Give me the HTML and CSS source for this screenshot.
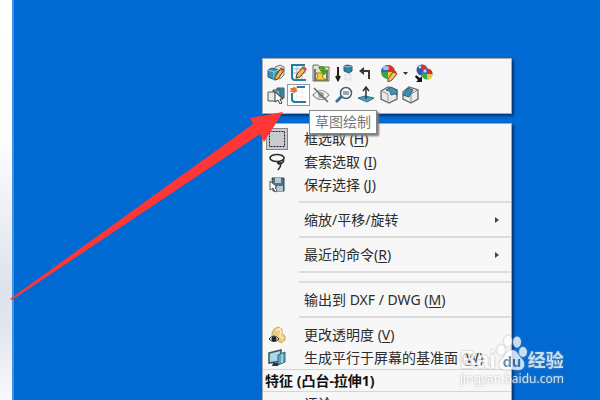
FILE: index.html
```html
<!DOCTYPE html>
<html lang="zh-CN">
<head>
<meta charset="utf-8">
<title>草图绘制</title>
<link rel="stylesheet" href="styles.css">
</head>
<body>
<main class="workspace">
  <aside class="side"></aside>
  <section class="canvas"></section>

  <div class="toolbar" role="toolbar">
    <div class="tools">
      <button class="tool" aria-label="编辑特征"><svg viewBox="0 0 18 18"><path d="M8 3l5-2 4 2v8l-4 4-5-2z" fill="#ddd" stroke="#777"/><path d="M1 6l4-2 6 2v8l-3 2-7-3z" fill="#3d93b5" stroke="#1f5d78"/><path d="M1 6l6 2 4-2M7 8v8" fill="none" stroke="#9bd0e4"/><path d="M8 13l6-9 3 2-6 9-3 1z" fill="#f0b84a" stroke="#5c3a1a"/><path d="M14 4l3 2-1 2-3-2z" fill="#d9534a"/></svg></button>
      <button class="tool" aria-label="编辑草图"><svg viewBox="0 0 18 18"><path d="M3 5h13M3 9h13M7 1v14M12 1v14" stroke="#a9b9c1" fill="none"/><path d="M15 1H2v12q0 3 3 3h11" fill="none" stroke="#237ca6" stroke-width="2"/><path d="M6 14l1-4 6-7 3 3-6 7z" fill="#f1bd4e" stroke="#543b22"/><path d="M12 4l2-2 3 3-2 2z" fill="#ce5148"/></svg></button>
      <button class="tool" aria-label="输入配置"><svg viewBox="0 0 18 18"><path d="M1 1h5l2 2h9v14H1z" fill="#e5e2d6" stroke="#71705f"/><path d="M3 5v11h12V7" fill="none" stroke="#777" stroke-width="2"/><path d="M4 9h8l-2 3 3 4H4l2-4z" fill="#f8d437" stroke="#9c7b20"/><path d="M7 3q6-2 6 3h3l-4 5-4-5h2q0-2-3-1z" fill="#4aa51e" stroke="#397d19" stroke-width=".6"/></svg></button>
      <button class="tool" aria-label="退回"><svg viewBox="0 0 18 18"><path d="M3 3v11M1 12l2 4 2-4" fill="none" stroke="#202020" stroke-width="2"/><path d="M9 2l3-1 5 1v5l-3 2-5-2z" fill="#347fa0" stroke="#205c77"/><path d="M9 2l4 1 4-1" stroke="#9ccce0" fill="none"/><path d="M10 11l6-1v6h-6z" fill="#f1f1f1" stroke="#d5d5d5" stroke-dasharray="2 1"/></svg></button>
      <button class="tool" aria-label="返回"><svg viewBox="0 0 18 18"><path d="M2 7l5-4v3h6v9h-2V8H7v3z" fill="#383838"/></svg></button>
      <button class="tool" aria-label="外观"><svg viewBox="0 0 18 18"><circle cx="8" cy="8" r="7" fill="#35a64a"/><path d="M8 8V1a7 7 0 0 0-7 7z" fill="#3264cf"/><path d="M8 8V1a7 7 0 0 1 7 7z" fill="#df3030"/><path d="M8 8h7a7 7 0 0 1-7 7z" fill="#f2ca31"/><ellipse cx="6" cy="4" rx="3" ry="2" fill="#fff" opacity=".6"/><path d="M8 15l5-7 4 2-5 6-4 2z" fill="#f3c75a" stroke="#6d4b2d"/><path d="M13 8l3-1 1 3z" fill="#c43e37"/></svg></button>
      <button class="caret" aria-label="更多外观"><svg viewBox="0 0 12 18"><path d="M3 8h5l-2.500 3z" fill="#333"/></svg></button>
      <button class="tool" aria-label="复制外观"><svg viewBox="0 0 18 18"><circle cx="7" cy="6" r="5.500" fill="#2c57ad"/><path d="M7 6V.5A5.500 5.500 0 0 1 12.500 6z" fill="#d73232"/><circle cx="12" cy="10" r="5.500" fill="#38a746"/><path d="M12 10V4.500a5.500 5.500 0 0 0-5.500 5.500z" fill="#3973d9"/><path d="M12 10V4.500a5.500 5.500 0 0 1 5.500 5.500z" fill="#de2930"/><path d="M12 10h5.500a5.500 5.500 0 0 1-5.500 5.500z" fill="#e9c934"/><circle cx="5" cy="3" r="1.500" fill="#bdd2f5"/><circle cx="10" cy="7" r="1.500" fill="#c5d8f8"/><path d="M1 11l4 3 2-2v6H1l2-2-3-3z" fill="#161616"/></svg></button>
    </div>
    <div class="tools">
      <button class="tool" aria-label="选择其他"><svg viewBox="0 0 18 18"><path d="M10 2h7v10h-7z" fill="#3988a9" stroke="#355d6e"/><path d="M6 4h7v9H6z" fill="#72aec6" stroke="#41505a"/><path d="M1 6h8v9H1z" fill="#e9e9e9" stroke="#555"/><path d="M8 6v10l3-2 2 4 2-1-2-4h3z" fill="#fff" stroke="#333"/></svg></button>
      <button class="tool selected" aria-label="草图绘制" aria-describedby="tip"><svg viewBox="0 0 18 18"><path d="M7 2v12M12 3v12M4 6h12M4 11h12" stroke="#ececec" fill="none"/><path d="M7 1h8M2 7v6q0 3 3 3h11" fill="none" stroke="#237ca6" stroke-width="2"/><path d="M4 0l1 2 2-1-1 3 2 1-3 1-1 2-1-2-3 0 1-2-1-2 3 0z" fill="#d87b3a"/><circle cx="4" cy="4" r="2.500" fill="#d87b3a"/></svg></button>
      <button class="tool" aria-label="隐藏"><svg viewBox="0 0 18 18"><path d="M1 9q8-9 16 0-8 9-16 0z" fill="#f4f4f4" stroke="#999" stroke-width="1.200"/><circle cx="9" cy="9" r="3" fill="#a2a2a2"/><path d="M2 2l14 14" stroke="#666" stroke-width="1.500"/></svg></button>
      <button class="tool" aria-label="放大所选范围"><svg viewBox="0 0 18 18"><path d="M7 10l-6 6" stroke="#2e7695" stroke-width="3"/><circle cx="11" cy="7" r="5.500" fill="#f5f8f8" stroke="#45616d" stroke-width="1.500"/><path d="M8 6h6M8 8h6" stroke="#555" stroke-width="1.200"/></svg></button>
      <button class="tool" aria-label="正视于"><svg viewBox="0 0 18 18"><path d="M1 12l7-2 9 2-7 4z" fill="#48a2c2" stroke="#28708b"/><path d="M9 13V2M6 5l3-4 3 4" stroke="#333" stroke-width="1.500" fill="none"/></svg></button>
      <button class="tool" aria-label="圆角"><svg viewBox="0 0 18 18"><path d="M1 5l7-4 9 3v9l-8 4-8-4z" fill="#e7e7e7" stroke="#666" stroke-width="1.300"/><path d="M1 5l7 3v9" stroke="#999" fill="none"/><path d="M6 4l5-3 6 3v5q-2-2-6 0 0-4-5-5z" fill="#4390af" stroke="#28677f"/></svg></button>
      <button class="tool" aria-label="倒角"><svg viewBox="0 0 18 18"><path d="M1 6l6-5 9 3v9l-7 4-8-4z" fill="#ececec" stroke="#666" stroke-width="1.300"/><path d="M9 17V8l7-4" stroke="#888" fill="none"/><path d="M1 9l5-7 5 2-4 7z" fill="#3990b1" stroke="#27647e"/></svg></button>
    </div>
  </div>

  <nav class="menu">
    <button class="item"><span class="icon pressed"><svg viewBox="0 0 18 18"><path d="M1.500 1.500h15v15h-15z" fill="#c8cbd1" stroke="#222" stroke-dasharray="2 1"/></svg></span><span>框选取 (<u>H</u>)</span></button>
    <button class="item"><span class="icon"><svg viewBox="0 0 18 18"><ellipse cx="9" cy="5" rx="7" ry="3.500" fill="none" stroke="#303030" stroke-width="1.700"/><path d="M15 6q2 4-4 5-3-2 0-2 4 2-1 8" fill="none" stroke="#303030" stroke-width="1.700"/></svg></span><span>套索选取 (<u>I</u>)</span></button>
    <button class="item"><span class="icon"><svg viewBox="0 0 18 18"><path d="M4 2h12v13H5z" fill="#47758b" stroke="#294957"/><path d="M7 2h6v5H7zM8 10h7v5H8z" fill="#b9c9cf"/><path d="M2 5v9l3-2 2 4 2-1-2-4h2z" fill="#fff" stroke="#555"/></svg></span><span>保存选择 (<u>J</u>)</span></button>
    <hr>
    <button class="item"><span class="icon"></span><span>缩放/平移/旋转</span><span class="more"></span></button>
    <hr>
    <button class="item"><span class="icon"></span><span>最近的命令(<u>R</u>)</span><span class="more"></span></button>
    <hr>
    <hr>
    <button class="item"><span class="icon"></span><span>输出到 DXF / DWG (<u>M</u>)</span></button>
    <hr>
    <button class="item"><span class="icon"><svg viewBox="0 0 18 18"><path d="M6 3l4-2 4 2v4l3 3v4l-4 3-4-3-5-2V7z" fill="#eacb80" stroke="#c4a968"/><path d="M8 4l4-1 1 3-1 4 3 3" fill="none" stroke="#f8e8b7" stroke-width="2"/><path d="M1 13q5-6 10 0-5 5-10 0z" fill="#eee" stroke="#333"/><circle cx="6" cy="13" r="2.500" fill="#222"/></svg></span><span>更改透明度 (<u>V</u>)</span></button>
    <button class="item"><span class="icon"><svg viewBox="0 0 18 18"><path d="M1 4l12-3v11L1 14z" fill="#a9d9e9" stroke="#36535f" stroke-width="1.500"/><path d="M10 6l7-3v10l-7 3z" fill="#5da9c4" stroke="#2c667c"/><path d="M14 5v9" stroke="#d9f1f7"/><path d="M5 14h5v3H4z" fill="#333"/></svg></span><span>生成平行于屏幕的基准面 (<u>W</u>)</span></button>
    <h2 class="heading">特征 (凸台-拉伸1)</h2>
    <button class="item"><span class="icon"></span><span>评论</span><span class="more"></span></button>
  </nav>

  <div class="tooltip" id="tip" role="tooltip">草图绘制</div>

  <svg class="arrow" viewBox="0 0 274 189" aria-hidden="true"><path d="M0 187L243 12l-3-6 33-6-19 30-4-8L2 188z" fill="#ff3636"/></svg>

  <div class="watermark">
    <div class="brand"><span class="latin">Bai</span><svg class="paw" viewBox="0 0 32 36" aria-hidden="true"><g fill="currentColor"><ellipse cx="5" cy="15" rx="4" ry="5"/><ellipse cx="12" cy="6" rx="4" ry="5.500"/><ellipse cx="21" cy="7" rx="4" ry="5.500"/><ellipse cx="27" cy="17" rx="4" ry="5"/><path d="M16 15c5 0 6 5 10 9 4 4 3 11-4 11q-6-1-12 0C3 35 1 28 6 24c4-4 5-9 10-9z"/></g><text x="16" y="32" text-anchor="middle">du</text></svg><span class="han">经验</span></div>
    <div class="site">jingyan.baidu.com</div>
  </div>
</main>
</body>
</html>
```
FILE: styles.css
```css
* { box-sizing: border-box; }

body {
  margin: 0;
  font: 14px/22px "Noto Sans", "Noto Sans CJK SC", sans-serif;
  color: #2c2c2c;
}

.workspace {
  position: relative;
  display: flex;
  height: 100vh;
  overflow: hidden;
}

.side {
  width: 12px;
  background: linear-gradient(#fff 0%, #fdfdff 35%, #dfe2ed 72%, #e3e6ef 82%, #f8f9fb 100%);
}

.canvas {
  flex: 1;
  background: #006ad2;
  border-left: 2px solid #3d94e8;
}

button {
  padding: 0;
  border: 0;
  background: none;
  color: inherit;
  font: inherit;
  text-align: left;
}

svg { display: block; }

.toolbar,
.menu {
  position: absolute;
  left: 262px;
  width: 250px;
  background: #f7f7f7;
  border: 1px solid #a5a9ae;
  box-shadow: 2px 2px 2px #00397a;
}

.toolbar {
  top: 58px;
  height: 56px;
  padding: 3px 2px;
}

.tools { display: flex; }

.tool {
  display: flex;
  align-items: center;
  justify-content: center;
  width: 22px;
  height: 22px;
}

.tool:nth-child(even) { width: 23px; }

.tool svg,
.icon svg {
  width: 18px;
  height: 18px;
}

.caret svg {
  width: 12px;
  height: 18px;
}

.selected {
  background: #fff;
  border: 1px solid #999;
}

.menu {
  display: flex;
  flex-direction: column;
  top: 123px;
  padding-top: 3px;
}

.item {
  display: flex;
  align-items: center;
  width: 100%;
  height: 23px;
  padding-right: 12px;
  white-space: nowrap;
}

.icon {
  display: flex;
  align-items: center;
  justify-content: center;
  width: 22px;
  height: 22px;
  margin: 0 16px 0 3px;
}

.pressed {
  background: #c8cbd1;
  border: 1px solid #858585;
}

.more {
  margin-left: auto;
  border: 3px solid transparent;
  border-left: 4px solid #444;
  border-right: 0;
}

u {
  text-decoration-thickness: 1px;
  text-underline-offset: 2px;
}

hr {
  height: 2px;
  margin: 5px 0 5px 36px;
  border: 0;
  background: #dcdcdc;
}

hr + hr { margin-top: 3px; }

.heading {
  height: 23px;
  margin: 0;
  padding-left: 2px;
  border: solid #d5d5d5;
  border-width: 1px 0;
  font-size: 14px;
  line-height: 21px;
  color: #111;
}

.tooltip {
  position: absolute;
  left: 309px;
  top: 110px;
  padding: 0 5px;
  border: 1px solid #858585;
  background: #fff;
  box-shadow: 2px 2px 2px #777;
  color: #777;
}

.arrow {
  position: absolute;
  left: 10px;
  top: 112px;
  width: 274px;
  height: 189px;
}

.watermark {
  position: absolute;
  left: 460px;
  top: 335px;
  color: #fff;
  opacity: 0.78;
  filter: drop-shadow(0 0 1px #999);
}

.brand {
  display: flex;
  align-items: flex-end;
  height: 36px;
}

.latin {
  font: 700 23px/22px "Liberation Sans", sans-serif;
}

.paw {
  width: 32px;
  height: 36px;
}

.paw text {
  font: 700 15px "Liberation Sans", sans-serif;
  fill: #4b7199;
}

.han {
  font: 700 18px/24px "Noto Sans CJK SC", sans-serif;
}

.site {
  font: 12px/16px "Noto Sans", sans-serif;
}
```
